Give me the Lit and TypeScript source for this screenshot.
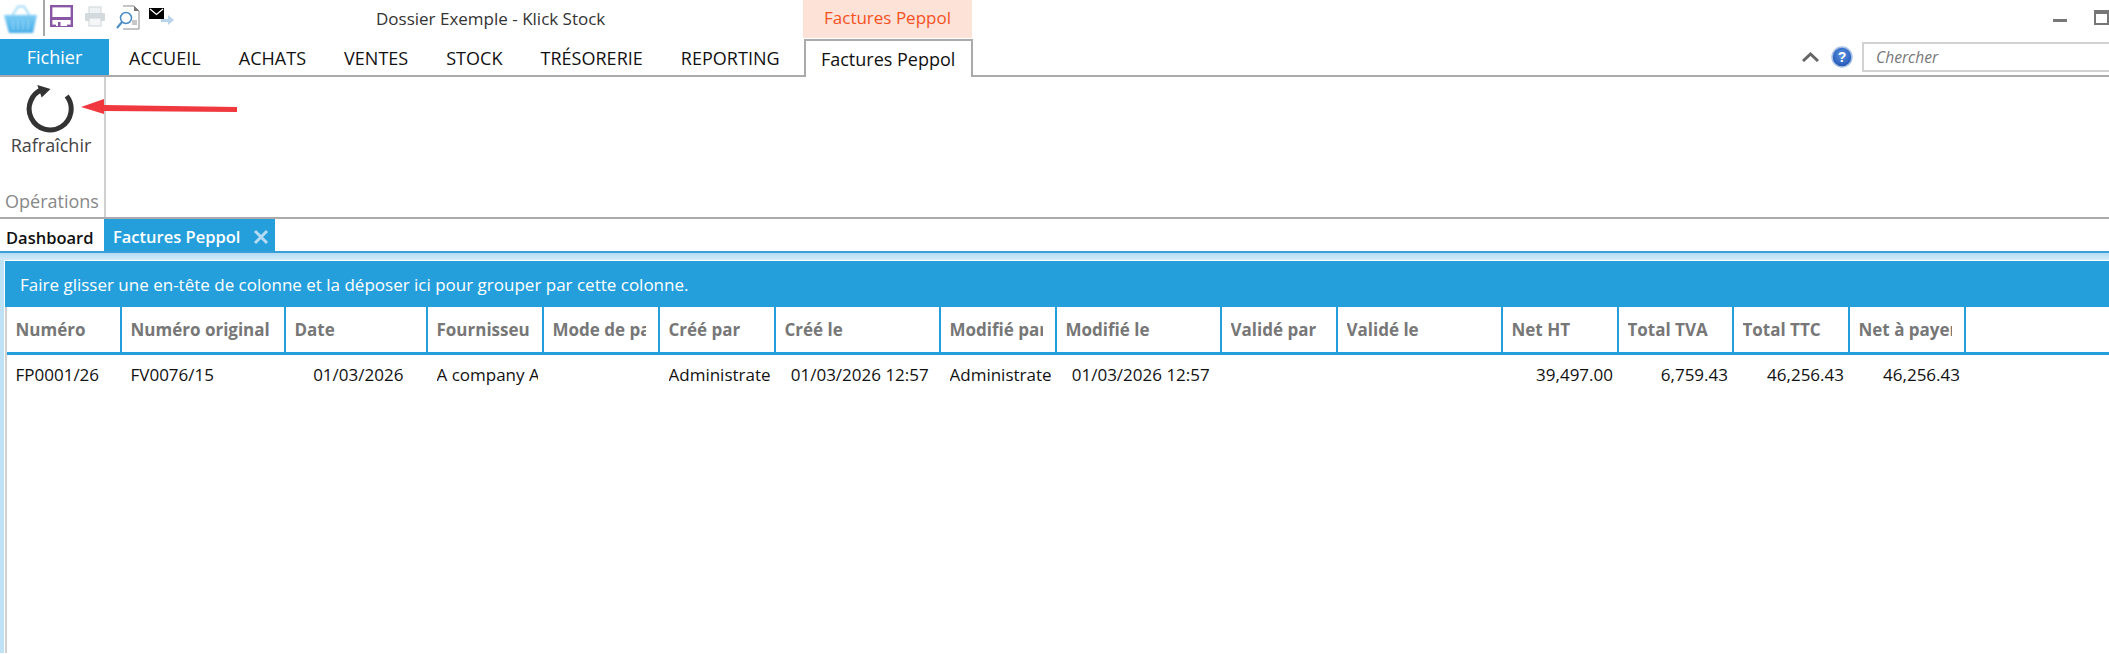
import { LitElement, html, css } from "lit";
import { customElement } from "lit/decorators.js";

const cols = [115, 164, 142, 116, 116, 116, 165, 116, 165, 116, 165, 116, 115, 116, 116];
const heads = ["Numéro", "Numéro original", "Date", "Fournisseur", "Mode de paiement", "Créé par", "Créé le", "Modifié par", "Modifié le", "Validé par", "Validé le", "Net HT", "Total TVA", "Total TTC", "Net à payer"];
const row: [string, string][] = [
  ["FP0001/26", "l"], ["FV0076/15", "l"], ["01/03/2026", "c"], ["A company ABC", "l"], ["", "l"],
  ["Administrateur", "l"], ["01/03/2026 12:57", "c"], ["Administrateur", "l"], ["01/03/2026 12:57", "c"],
  ["", "l"], ["", "l"], ["39,497.00", "r"], ["6,759.43", "r"], ["46,256.43", "r"], ["46,256.43", "r"],
];
const tabs = ["ACCUEIL", "ACHATS", "VENTES", "STOCK", "TRÉSORERIE", "REPORTING"];

@customElement("app-root")
export class AppRoot extends LitElement {
  static styles = css`
    :host { display: block; width: 2109px; height: 654px; overflow: hidden; background: #fff; position: relative;
      font-family: "Open Sans", "Noto Sans", "Liberation Sans", sans-serif; font-size: 17px; color: #111; }
    .title { height: 39px; display: flex; align-items: flex-start; position: relative; }
    .basket { margin: 4px 0 0 4px; width: 33px; height: 29px; filter: blur(0.8px); }
    .qsep { width: 2px; height: 36px; background: #a8a8a8; margin-left: 6px; }
    .save { margin: 5px 0 0 5px; width: 23px; height: 22px; }
    .print { margin: 6px 0 0 11px; width: 22px; height: 21px; }
    .prev { margin: 5px 0 0 10px; width: 24px; height: 25px; }
    .mail { margin: 8px 0 0 9px; width: 25px; height: 17px; }
    .doc { margin: 7px 0 0 202px; width: 240px; color: #333; white-space: nowrap; }
    .ctx { margin-left: 187px; width: 169px; height: 38px; background: #fde2d8; color: #f4511e; text-align: center; line-height: 36px; }
    .spacer { flex: 1; }
    .min { width: 14px; height: 3px; background: #777; margin: 19px 27px 0 0; }
    .max { width: 15px; height: 15px; border: 2px solid #777; border-top-width: 4px; box-sizing: border-box; margin: 10px 0 0 0; flex: none; }
    .tabs { height: 36px; display: flex; border-bottom: 2px solid #aaa; align-items: stretch; }
    .fichier { width: 109px; background: #259fdc; color: #fff; text-align: center; line-height: 36px; font-size: 18px; flex: none; }
    .tab { padding: 0 19px; line-height: 38px; white-space: nowrap; font-size: 18px; letter-spacing: 0.02px; }
    .tab.first { margin-left: 1px; }
    .tab.active { box-sizing: border-box; width: 169px; height: 38px; padding: 0; text-align: center; border: 2px solid #aaa; border-bottom: 0;
      background: #fff; margin-left: 5px; line-height: 36px; letter-spacing: 0; }
    .tools { margin-left: auto; display: flex; align-items: center; height: 36px; }
    .chev { width: 17px; height: 10px; margin-right: 12px; }
    .help { width: 22px; height: 22px; margin-right: 9px; }
    .search { width: 247px; height: 30px; box-sizing: border-box; border: 2px solid #d2d2d2; border-right: 0; padding-left: 12px; color: #777;
      font-style: italic; line-height: 26px; font-size: 15.6px; }
    .ribbon { height: 140px; border-bottom: 2px solid #aaa; display: flex; }
    .group { width: 104px; box-sizing: content-box; border-right: 2px solid #d0d0d0; display: flex; flex-direction: column; align-items: center; }
    .refresh { width: 52px; height: 52px; margin-top: 6px; flex: none; }
    .rlabel { color: #444; font-size: 18px; line-height: 24px; margin-top: -2px; padding-right: 2px; }
    .glabel { color: #888; margin-top: auto; margin-bottom: 4px; font-size: 18px; line-height: 24px; }
    .doctabs { height: 34px; display: flex; align-items: flex-end; border-bottom: 2px solid #3b9fd6; box-sizing: border-box; }
    .dash { width: 104px; box-sizing: border-box; padding-left: 6px; font-weight: 600; font-size: 16.5px; line-height: 27px; color: #111; }
    .dtab { width: 171px; height: 32px; box-sizing: border-box; background: #259fdc; color: #fff; font-weight: 600; font-size: 16.5px; display: flex;
      align-items: center; padding: 3px 0 0 9px; white-space: nowrap; }
    .x { width: 16px; height: 16px; margin-left: 13px; flex: none; }
    .band { height: 7px; background: linear-gradient(#b4dcf3, #d3ebf9); }
    .body { height: 393px; border-left: 4px solid #bfe2f6; }
    .panel { height: 100%; border-left: 1px solid #fff; border-top: 1px solid #fff; box-sizing: border-box; display: flex; flex-direction: column; }
    .groupbar { height: 46px; box-sizing: border-box; flex: none; background: #259fdc; color: #fff; padding-left: 15px; line-height: 48px; }
    .grid { flex: 1; display: grid; grid-template-columns: var(--cols) 1fr; grid-auto-rows: min-content; border-left: 2px solid #d0d0d0; margin-left: 0; }
    .hd { height: 45px; box-sizing: border-box; border-right: 2px solid #259fdc; padding: 0 0 0 8.5px; color: #777; font-weight: 700;
      line-height: 45px; overflow: hidden; white-space: nowrap; }
    .hd > span { display: block; overflow: hidden; margin-right: 12px; }
    .hd.wide > span { margin-right: 5px; }
    .hd.end { border-right: 0; }
    .rule { grid-column: 1 / -1; height: 3px; background: #259fdc; }
    .cell { height: 40px; line-height: 39px; padding: 0 6px 0 8.5px; }
    .cell > span { display: block; white-space: nowrap; overflow: hidden; }
    .cell.c { text-align: center; }
    .cell.r { text-align: right; }
    .arrow { position: absolute; left: 78px; top: 94px; width: 162px; height: 24px; }
  `;

  render() {
    const gridCols = `--cols:${cols.map((c) => c + "px").join(" ")}`;
    return html`
      <div class="title">
        <svg class="basket" viewBox="0 0 33 29">
          <defs><linearGradient id="bg" x1="0" y1="0" x2="0" y2="1"><stop offset="0" stop-color="#7fcdf5"/><stop offset="1" stop-color="#45ade8"/></linearGradient></defs>
          <path d="M8 12 L14 2.5 H20 L26 12" fill="none" stroke="#a5dcf7" stroke-width="2"/>
          <path d="M0 11 H33 L29 29 H5 Z" fill="url(#bg)"/>
          <path d="M9 16V26M14 16V26M19 16V26M24 16V26" stroke="#8ed2f4" stroke-width="1.5"/>
        </svg>
        <div class="qsep"></div>
        <svg class="save" viewBox="0 0 23 22">
          <rect x="1.2" y="1.2" width="20.6" height="19.6" fill="#fff" stroke="#8a57a6" stroke-width="2.4"/>
          <rect x="1" y="12" width="21" height="3" fill="#8a57a6"/>
          <rect x="6" y="15" width="11" height="6" fill="#fff"/>
          <rect x="8" y="17" width="2.5" height="4" fill="#8a57a6"/>
        </svg>
        <svg class="print" viewBox="0 0 22 21">
          <rect x="5" y="1" width="12" height="7" fill="#eef2f5" stroke="#cfd6da"/>
          <rect x="1" y="7" width="20" height="8" rx="1" fill="#d3dade"/>
          <rect x="5" y="12" width="12" height="8" fill="#f4f6f7" stroke="#cfd6da"/>
        </svg>
        <svg class="prev" viewBox="0 0 24 25">
          <path d="M7 1H18L23 6V24H7" fill="#fff" stroke="#8a8a8a"/>
          <path d="M18 1V6H23" fill="#777"/>
          <rect x="16" y="15" width="5" height="5" fill="#c8c8c8"/>
          <circle cx="10" cy="13" r="5.5" fill="#fff" stroke="#4a8cc4" stroke-width="1.5"/>
          <path d="M6 17L1 23" stroke="#4a8cc4" stroke-width="2"/>
        </svg>
        <svg class="mail" viewBox="0 0 25 17">
          <rect x="0" y="0" width="15" height="11" fill="#000"/>
          <path d="M1 1L7.5 6.5L14 1" fill="none" stroke="#fff" stroke-width="1.3"/>
          <path d="M12 11H19V7L25 12L19 17V14H12Z" fill="#b8d3ea"/>
        </svg>
        <div class="doc">Dossier Exemple - Klick Stock</div>
        <div class="ctx">Factures Peppol</div>
        <div class="spacer"></div>
        <div class="min"></div>
        <div class="max"></div>
      </div>
      <div class="tabs">
        <div class="fichier">Fichier</div>
        ${tabs.map((t, i) => html`<div class="tab ${i === 0 ? "first" : ""}">${t}</div>`)}
        <div class="tab active">Factures Peppol</div>
        <div class="tools">
          <svg class="chev" viewBox="0 0 17 10"><path d="M1 9L8.5 2L16 9" fill="none" stroke="#666" stroke-width="3"/></svg>
          <svg class="help" viewBox="0 0 22 22">
            <defs><radialGradient id="hg" cx="50%" cy="40%" r="60%"><stop offset="0" stop-color="#5f95e0"/><stop offset="1" stop-color="#1f55b5"/></radialGradient></defs>
            <circle cx="11" cy="11" r="10" fill="url(#hg)" stroke="#a8c2e6" stroke-width="1.5"/>
            <text x="11" y="16" text-anchor="middle" font-size="14" font-weight="700" fill="#fff" font-family="Liberation Sans">?</text>
          </svg>
          <div class="search">Chercher</div>
        </div>
      </div>
      <div class="ribbon">
        <div class="group">
          <svg class="refresh" viewBox="0 0 52 52">
            <path d="M40.7 13 A21 21 0 1 1 17 6.2" fill="none" stroke="#333" stroke-width="5"/>
            <path d="M11.3 2 L24.5 6 L15.7 14.5 Z" fill="#333"/>
          </svg>
          <div class="rlabel">Rafraîchir</div>
          <div class="glabel">Opérations</div>
        </div>
      </div>
      <div class="doctabs">
        <div class="dash">Dashboard</div>
        <div class="dtab">Factures Peppol
          <svg class="x" viewBox="0 0 16 16"><path d="M2 2L14 14M14 2L2 14" stroke="#b5dcf3" stroke-width="3"/></svg>
        </div>
      </div>
      <div class="band"></div>
      <div class="body">
        <div class="panel">
          <div class="groupbar">Faire glisser une en-tête de colonne et la déposer ici pour grouper par cette colonne.</div>
          <div class="grid" style=${gridCols}>
            ${heads.map((h, i) => html`<div class="hd ${i === 1 ? "wide" : ""}"><span>${h}</span></div>`)}
            <div class="hd end"></div>
            <div class="rule"></div>
            ${row.map(([v, a]) => html`<div class="cell ${a}"><span>${v}</span></div>`)}
          </div>
        </div>
      </div>
      <svg class="arrow" viewBox="0 0 162 24">
        <path d="M3 13 L26 5 L26 11 L159 13 L159 18 L26 17 L26 20 Z" fill="#f0383f"/>
      </svg>
    `;
  }
}
